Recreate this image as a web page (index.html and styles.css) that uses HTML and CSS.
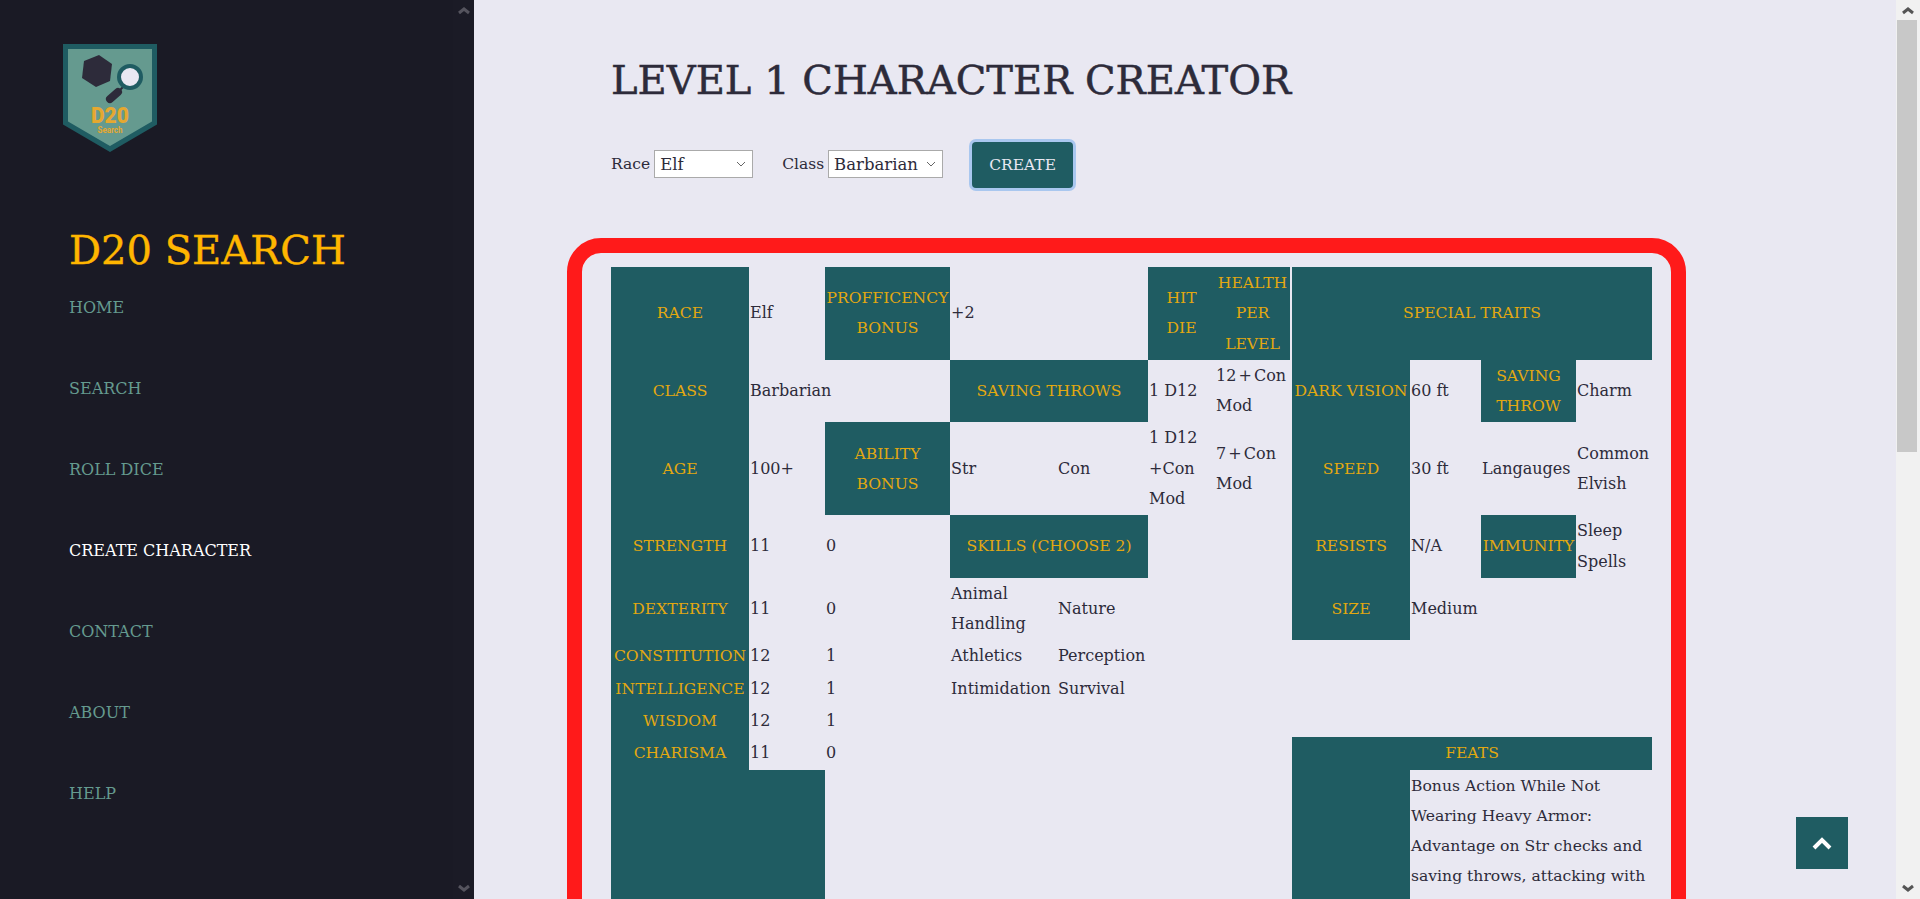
FILE: index.html
```html
<!DOCTYPE html>
<html lang="en">
<head>
	<meta charset="UTF-8">
	<title>Level 1 Character Creator</title>
	<link rel="stylesheet" href="styles.css">
</head>
<body>
	<aside class="sidebar">
		<div class="side-content">
			<svg class="logo" width="94" height="109" viewBox="0 0 94 109">
				<polygon points="2.5,2.5 91.5,2.5 91.5,79 47,105 2.5,79" fill="#659a8f" stroke="#1f5c62" stroke-width="5"/>
				<polygon points="36,11 49,20 47,37 33,43 19,34 21,17" fill="#2d2b3a"/>
				<line x1="47" y1="55" x2="55" y2="48" stroke="#2d2b3a" stroke-width="8" stroke-linecap="round"/>
				<line x1="55" y1="48" x2="60" y2="43" stroke="#2d2b3a" stroke-width="2"/>
				<circle cx="67" cy="33" r="11" fill="#e9e8f2" stroke="#1f5c62" stroke-width="4"/>
				<text x="47" y="79" text-anchor="middle" class="logo-big" textLength="38" lengthAdjust="spacingAndGlyphs">D20</text>
				<text x="47" y="89" text-anchor="middle" class="logo-small" textLength="25" lengthAdjust="spacingAndGlyphs">Search</text>
			</svg>
			<h2 class="brand">D20 SEARCH</h2>
			<nav class="nav">
				<a href="#">HOME</a>
				<a href="#">SEARCH</a>
				<a href="#">ROLL DICE</a>
				<a href="#" class="active">CREATE CHARACTER</a>
				<a href="#">CONTACT</a>
				<a href="#">ABOUT</a>
				<a href="#">HELP</a>
			</nav>
		</div>
		<div class="side-scroll">
			<svg width="14" height="10" viewBox="0 0 14 10"><path d="M2 7l5-4 5 4" fill="none" stroke="#55545e" stroke-width="3"/></svg>
			<svg width="14" height="10" viewBox="0 0 14 10"><path d="M2 3l5 4 5-4" fill="none" stroke="#55545e" stroke-width="3"/></svg>
		</div>
	</aside>

	<main class="main">
		<h1 class="title">LEVEL 1 CHARACTER CREATOR</h1>
		<form class="picker">
			<label class="pick">Race
				<select class="race">
					<option>Elf</option>
					<option>Dwarf</option>
					<option>Human</option>
				</select>
			</label>
			<label class="pick">Class
				<select class="klass">
					<option>Barbarian</option>
					<option>Bard</option>
					<option>Wizard</option>
				</select>
			</label>
			<button type="button" class="create">CREATE</button>
		</form>

		<div class="sheet">
			<table>
				<colgroup>
					<col class="c1"><col class="c2"><col class="c3"><col class="c4"><col class="c5"><col class="c6">
					<col class="c7"><col class="c8"><col class="c9"><col class="c10"><col class="c11">
				</colgroup>
				<tr>
					<th>RACE</th><td>Elf</td>
					<th>PROFFICENCY BONUS</th><td colspan="2">+2</td>
					<th>HIT DIE</th><th class="health">HEALTH PER LEVEL</th>
					<th colspan="4">SPECIAL TRAITS</th>
				</tr>
				<tr>
					<th>CLASS</th><td>Barbarian</td><td></td>
					<th colspan="2">SAVING THROWS</th>
					<td>1 D12</td><td><span class="tight">12 + Con</span> Mod</td>
					<th>DARK VISION</th><td>60 ft</td><th>SAVING THROW</th><td>Charm</td>
				</tr>
				<tr>
					<th>AGE</th><td>100+</td>
					<th>ABILITY BONUS</th><td>Str</td><td>Con</td>
					<td>1 D12 +Con Mod</td><td><span class="tight">7 + Con</span> Mod</td>
					<th>SPEED</th><td>30 ft</td><td>Langauges</td><td>Common Elvish</td>
				</tr>
				<tr>
					<th>STRENGTH</th><td>11</td><td>0</td>
					<th colspan="2">SKILLS (CHOOSE 2)</th>
					<td></td><td></td>
					<th>RESISTS</th><td>N/A</td><th>IMMUNITY</th><td>Sleep Spells</td>
				</tr>
				<tr>
					<th>DEXTERITY</th><td>11</td><td>0</td>
					<td>Animal Handling</td><td>Nature</td>
					<td></td><td></td>
					<th>SIZE</th><td>Medium</td><td></td><td></td>
				</tr>
				<tr>
					<th>CONSTITUTION</th><td>12</td><td>1</td>
					<td>Athletics</td><td>Perception</td>
					<td colspan="6"></td>
				</tr>
				<tr>
					<th>INTELLIGENCE</th><td>12</td><td>1</td>
					<td>Intimidation</td><td>Survival</td>
					<td colspan="6"></td>
				</tr>
				<tr>
					<th>WISDOM</th><td>12</td><td>1</td>
					<td colspan="8"></td>
				</tr>
				<tr>
					<th>CHARISMA</th><td>11</td><td>0</td>
					<td colspan="4"></td>
					<th colspan="4">FEATS</th>
				</tr>
				<tr>
					<th colspan="2"></th>
					<td colspan="5"></td>
					<th></th>
					<td colspan="3" class="feat">Bonus Action While Not Wearing Heavy Armor: Advantage on Str checks and saving throws, attacking with melee weapons and gain bonus damage. Resistance to bludgeoning, piercing and slashing.</td>
				</tr>
			</table>
		</div>

		<a href="#" class="to-top">
			<svg width="20" height="14" viewBox="0 0 20 14"><path d="M2 12l8-8 8 8" fill="none" stroke="#fff" stroke-width="4"/></svg>
		</a>
	</main>

	<div class="page-scroll">
		<svg class="arrow" width="14" height="10" viewBox="0 0 14 10"><path d="M2 7l5-4 5 4" fill="none" stroke="#555" stroke-width="3"/></svg>
		<div class="thumb"></div>
		<svg class="arrow down" width="14" height="10" viewBox="0 0 14 10"><path d="M2 3l5 4 5-4" fill="none" stroke="#555" stroke-width="3"/></svg>
	</div>
</body>
</html>
```

FILE: styles.css
```css
* {
	box-sizing: border-box;
}
html, body {
	height: 100%;
	margin: 0;
	overflow: hidden;
}
body {
	display: flex;
	background: #e9e8f2;
	color: #2d2b3a;
	font-family: "DejaVu Serif", "Liberation Serif", serif;
}

/* sidebar */
.sidebar {
	display: flex;
	width: 474px;
	height: 899px;
	flex-shrink: 0;
	background: #1a1a25;
}
.side-content {
	flex: 1;
	padding: 44px 0 0 63px;
}
.logo {
	display: block;
}
.logo-big {
	font-family: "Roboto", sans-serif;
	font-weight: 900;
	font-size: 22px;
	fill: #e5a830;
}
.logo-small {
	font-family: "Roboto", sans-serif;
	font-weight: 700;
	font-size: 9px;
	fill: #e5a830;
}
.brand {
	margin: 79px 0 0 6px;
	font-size: 40px;
	line-height: 36px;
	font-weight: 400;
	color: #ffb600;
	white-space: nowrap;
	-webkit-text-stroke: .4px #ffb600;
}
.nav {
	display: flex;
	flex-direction: column;
	margin-left: 6px;
}
.nav a {
	height: 81px;
	line-height: 79px;
	font-size: 16px;
	color: #659a8f;
	text-decoration: none;
}
.nav a.active {
	color: #fff;
}
.side-scroll {
	display: flex;
	flex-direction: column;
	justify-content: space-between;
	align-items: center;
	width: 21px;
	padding: 6px 0;
	background: #1b1b26;
}

/* main column */
.main {
	flex: 1;
	min-width: 0;
	height: 899px;
	overflow: hidden;
	padding: 55px 0 0 137px;
}
.title {
	margin: 0;
	font-size: 40px;
	line-height: 50px;
	font-weight: 400;
	white-space: nowrap;
	-webkit-text-stroke: .5px #2d2b3a;
}
.picker {
	display: flex;
	align-items: center;
	margin-top: 37px;
	height: 46px;
	font-size: 15.5px;
}
.pick {
	display: flex;
	align-items: center;
	gap: 4px;
	margin-right: 29px;
	margin-bottom: 2px;
}
select {
	height: 28px;
	padding: 0 5px;
	appearance: none;
	background: #fff url("data:image/svg+xml,%3Csvg xmlns='http://www.w3.org/2000/svg' width='10' height='6'%3E%3Cpath d='M1 1l4 4 4-4' fill='none' stroke='%23666'/%3E%3C/svg%3E") no-repeat right 6px center;
	border: 1px solid #aaa;
	border-radius: 0;
	color: #2d2b3a;
	font-family: inherit;
	font-size: 16.5px;
}
.race {
	width: 99px;
}
.klass {
	width: 115px;
}
.create {
	width: 101px;
	height: 46px;
	background: #1f5c62;
	color: #e9e8f2;
	border: 0;
	border-radius: 4px;
	box-shadow: 0 0 0 3px #a9c7ef;
	font-family: inherit;
	font-size: 15.5px;
}

/* stat table */
.sheet {
	width: 1119px;
	margin: 50px 0 0 -44px;
	padding: 14px 19px 0 29px;
	border: 15px solid #ff1a1a;
	border-radius: 34px;
}
table {
	table-layout: fixed;
	width: 1041px;
	border-collapse: separate;
	border-spacing: 0;
	font-size: 16px;
	line-height: 30.28px;
}
.c1 { width: 138px; }
.c2 { width: 76px; }
.c3 { width: 125px; }
.c4 { width: 107px; }
.c5 { width: 91px; }
.c6 { width: 67px; }
.c7 { width: 77px; }
.c8 { width: 118px; }
.c9 { width: 71px; }
.c10 { width: 95px; }
.c11 { width: 76px; }
th, td {
	padding: 1px;
	vertical-align: middle;
	text-align: left;
}
th {
	background: #1f5c62;
	color: #e3a810;
	font-weight: 400;
	font-size: 15.6px;
	text-align: center;
}
th.health {
	border-right: 2px solid #e9e8f2;
}
.tight {
	word-spacing: -3px;
	white-space: nowrap;
}
.feat {
	font-size: 15.6px;
}

/* back to top */
.to-top {
	position: fixed;
	left: 1796px;
	top: 817px;
	display: flex;
	align-items: center;
	justify-content: center;
	width: 52px;
	height: 52px;
	background: #1f5c62;
}

/* page scrollbar */
.page-scroll {
	display: flex;
	flex-direction: column;
	align-items: center;
	width: 24px;
	height: 899px;
	flex-shrink: 0;
	background: #f1f1f1;
}
.arrow {
	flex-shrink: 0;
	margin: 6px 0 4px;
}
.arrow.down {
	margin: auto 0 6px;
}
.thumb {
	width: 20px;
	height: 432px;
	margin-right: 2px;
	background: #c8c8c8;
}
```
